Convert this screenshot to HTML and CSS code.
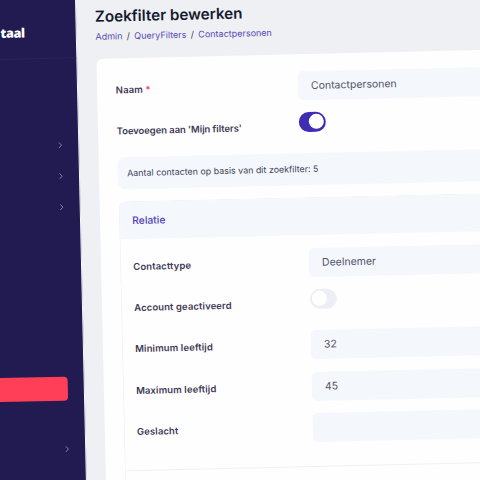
FILE: index.html
```
<!DOCTYPE html>
<html lang="nl">
<head>
    <meta charset="UTF-8">
    <meta name="viewport" content="width=device-width, initial-scale=1.0">
    <title>Zoekfilter bewerken</title>
    <link rel="stylesheet" href="styles.css">
</head>
<body>
    <div class="app">
        <aside class="sidebar">
            <div class="brand">taal</div>
            <nav class="menu">
                <div class="menu-item"><svg class="chevron" viewBox="0 0 4 7"><path d="M0.6 0.7L3.2 3.5L0.6 6.3"/></svg></div>
                <div class="menu-item"><svg class="chevron" viewBox="0 0 4 7"><path d="M0.6 0.7L3.2 3.5L0.6 6.3"/></svg></div>
                <div class="menu-item"><svg class="chevron" viewBox="0 0 4 7"><path d="M0.6 0.7L3.2 3.5L0.6 6.3"/></svg></div>
            </nav>
            <div class="menu-active"></div>
            <div class="menu-item menu-last"><svg class="chevron" viewBox="0 0 4 7"><path d="M0.6 0.7L3.2 3.5L0.6 6.3"/></svg></div>
        </aside>

        <main class="content">
            <h1>Zoekfilter bewerken</h1>
            <div class="breadcrumb">
                <a>Admin</a><span>/</span><a>QueryFilters</a><span>/</span><a>Contactpersonen</a>
            </div>

            <div class="card">
                <div class="row">
                    <label>Naam <em>*</em></label>
                    <div class="field">Contactpersonen</div>
                </div>
                <div class="row">
                    <label class="long">Toevoegen aan 'Mijn filters'</label>
                    <div class="toggle on"></div>
                </div>

                <div class="info">Aantal contacten op basis van dit zoekfilter: 5</div>

                <div class="panel">
                    <div class="panel-header">Relatie</div>
                    <div class="panel-body">
                        <div class="row">
                            <label>Contacttype</label>
                            <div class="field">Deelnemer</div>
                        </div>
                        <div class="row">
                            <label>Account geactiveerd</label>
                            <div class="toggle"></div>
                        </div>
                        <div class="row">
                            <label>Minimum leeftijd</label>
                            <div class="field">32</div>
                        </div>
                        <div class="row">
                            <label>Maximum leeftijd</label>
                            <div class="field">45</div>
                        </div>
                        <div class="row">
                            <label>Geslacht</label>
                            <div class="field"></div>
                        </div>
                    </div>
                </div>
            </div>
        </main>
    </div>
</body>
</html>
```
FILE: styles.css
```
* { box-sizing: border-box; }
html, body { height: 100%; }
body { margin: 0; overflow: hidden; background: #eef0f5; font-family: Inter, "Open Sans", sans-serif; }

/* the whole app is slightly tilted, the bleed keeps the corners covered */
.app {
    display: flex; width: 540px; height: 520px; margin: -10px 0 0 -20px;
    transform: rotate(-1.3deg); transform-origin: 20px 10px;
}

.sidebar {
    flex: none; width: 95.5px; background: #221b51; border-right: 1px solid #f8f9fd;
    display: flex; flex-direction: column;
}
.brand {
    height: 70px; padding: 32.5px 0 0 19.6px; border-bottom: 1px solid #2a2459;
    color: #fff; font: 800 12.8px/20px "Open Sans", sans-serif; letter-spacing: -0.4px;
}
.menu { padding-top: 71.6px; }
.menu-item { height: 30.6px; display: flex; align-items: center; justify-content: flex-end; padding-right: 16px; }
.chevron { width: 4px; height: 7px; fill: none; stroke: #8f8ab0; stroke-width: 0.9; }
.menu-active { height: 24.5px; margin: 154.5px 15.2px 0 0; border-radius: 4px; background: #ff3f58; }
.menu-last { margin-top: 32.5px; }

.content { flex: 1; padding: 18.7px 0 0 19px; background: #eef0f4; }
h1 { margin: 0; font-size: 15.2px; line-height: 20px; font-weight: 600; color: #171a2e; white-space: nowrap; }
.breadcrumb { display: flex; margin-top: 2px; font-size: 9px; line-height: 16px; color: #3e3c55; }
.breadcrumb a { color: #5a4bb5; }
.breadcrumb span { margin: 0 4.3px; }

.card { height: 470px; margin-top: 14px; padding: 17.4px 0 0 19.2px; border-radius: 7px 0 0 0; background: #fefefe; }
.row { display: flex; height: 29px; margin-bottom: 12.2px; }
.row label { flex: none; width: 182px; line-height: 30.4px; font-size: 9.5px; font-weight: 600; letter-spacing: 0.1px; color: #3f3a55; white-space: nowrap; }
.row label.long { letter-spacing: -0.08px; }
.row em { color: #f5365c; font-style: normal; }
.field { flex: 1; padding-left: 13.2px; border-radius: 5px; background: #f4f7fb; font-size: 10.5px; line-height: 29.4px; color: #55526b; }

.toggle { width: 27.5px; height: 19.5px; padding: 2.2px; border-radius: 10px; background: #eeeff4; }
.toggle::after { content: ""; display: block; width: 15px; height: 15px; border-radius: 50%; background: #fff; }
.toggle.on { background: #3f2db3; }
.toggle.on::after { margin-left: auto; }

.info { height: 32px; padding-left: 9.5px; border-radius: 7px; background: #f4f7fb; font-size: 8.9px; line-height: 31px; color: #45445a; }
.panel { margin-top: 11.2px; border: 1px solid #f2f3f8; border-right: 0; border-radius: 7px 0 0 0; height: 320px; overflow: hidden; }
.panel-header { height: 37px; padding-left: 12.5px; background: #f4f7fb; font-size: 10.3px; line-height: 36.4px; font-weight: 500; color: #5140b8; }
.panel-body { padding: 13.3px 0 12.4px 12.5px; border-bottom: 1px solid #f0f1f6; }
.panel-body .row label { width: 175.6px; }
```
